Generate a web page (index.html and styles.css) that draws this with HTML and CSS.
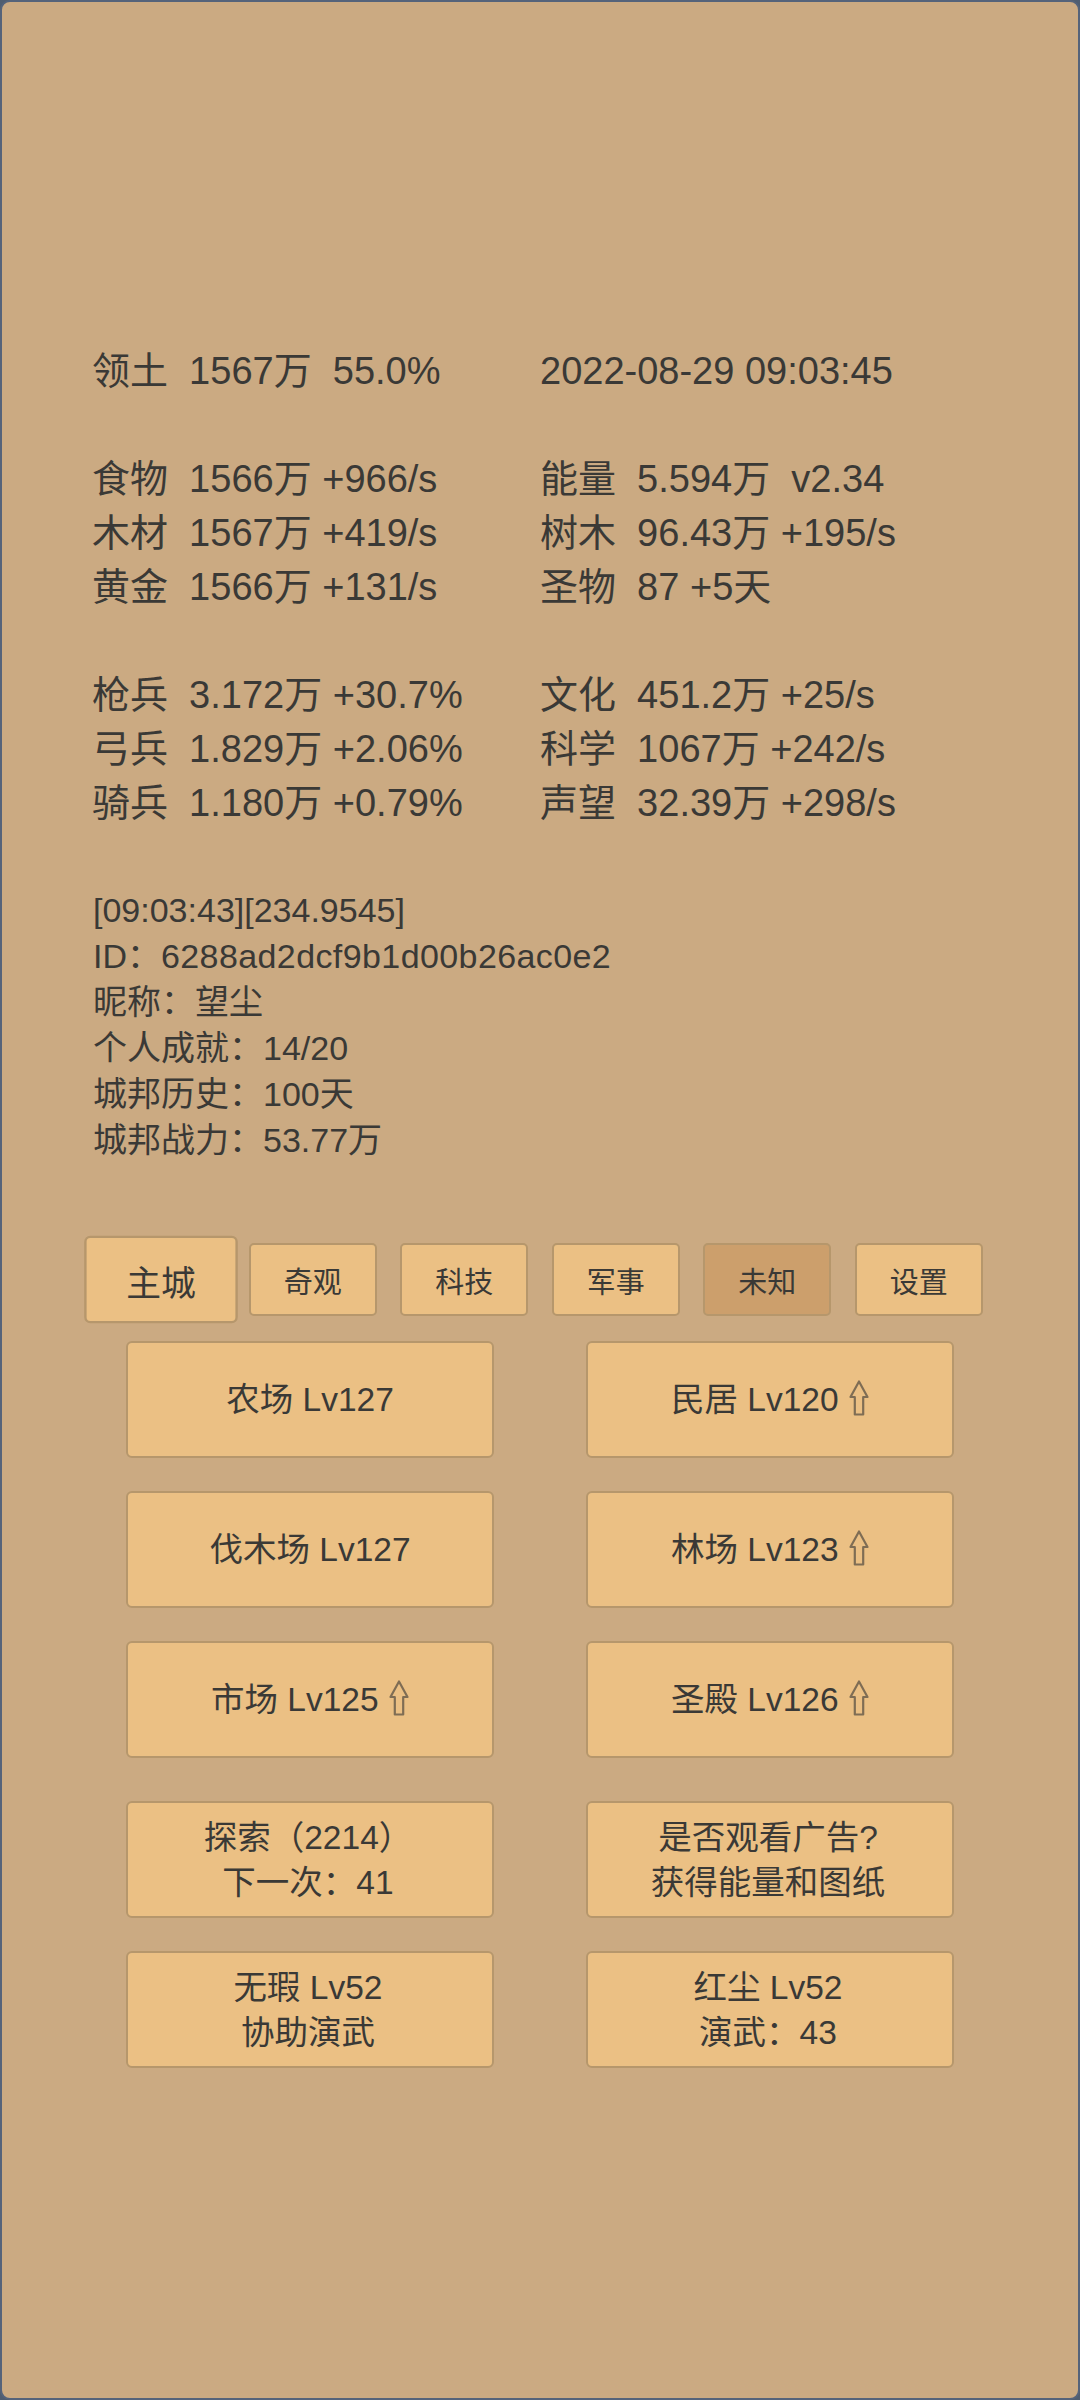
FILE: index.html
```html
<!DOCTYPE html>
<html lang="zh-CN">
<head>
    <meta charset="UTF-8">
    <meta name="viewport" content="width=device-width, initial-scale=1.0">
    <title>城邦</title>
    <link rel="stylesheet" href="styles.css">
</head>
<body>
    <div class="frame">
        <div class="stats">
            <div class="group">
                <span>领土  1567万  55.0%</span>
                <span>2022-08-29 09:03:45</span>
            </div>
            <div class="group">
                <span>食物  1566万 +966/s</span>
                <span>能量  5.594万  v2.34</span>
                <span>木材  1567万 +419/s</span>
                <span>树木  96.43万 +195/s</span>
                <span>黄金  1566万 +131/s</span>
                <span>圣物  87 +5天</span>
            </div>
            <div class="group">
                <span>枪兵  3.172万 +30.7%</span>
                <span>文化  451.2万 +25/s</span>
                <span>弓兵  1.829万 +2.06%</span>
                <span>科学  1067万 +242/s</span>
                <span>骑兵  1.180万 +0.79%</span>
                <span>声望  32.39万 +298/s</span>
            </div>
        </div>

        <div class="info">
            <p>[09:03:43][234.9545]</p>
            <p>ID：<span class="uid">6288ad2dcf9b1d00b26ac0e2</span></p>
            <p>昵称：望尘</p>
            <p>个人成就：14/20</p>
            <p>城邦历史：100天</p>
            <p>城邦战力：53.77万</p>
        </div>

        <div class="tabs">
            <button class="tab active">主城</button>
            <button class="tab">奇观</button>
            <button class="tab">科技</button>
            <button class="tab">军事</button>
            <button class="tab pressed">未知</button>
            <button class="tab">设置</button>
        </div>

        <div class="buildings">
            <button class="bld">农场 Lv127</button>
            <button class="bld">民居 Lv120 <svg class="up" viewBox="0 0 20 36"><path d="M10 1.5 L18.5 17 L14.2 17 L14.2 34.5 L5.8 34.5 L5.8 17 L1.5 17 Z"/></svg></button>
            <button class="bld">伐木场 Lv127</button>
            <button class="bld">林场 Lv123 <svg class="up" viewBox="0 0 20 36"><path d="M10 1.5 L18.5 17 L14.2 17 L14.2 34.5 L5.8 34.5 L5.8 17 L1.5 17 Z"/></svg></button>
            <button class="bld">市场 Lv125 <svg class="up" viewBox="0 0 20 36"><path d="M10 1.5 L18.5 17 L14.2 17 L14.2 34.5 L5.8 34.5 L5.8 17 L1.5 17 Z"/></svg></button>
            <button class="bld">圣殿 Lv126 <svg class="up" viewBox="0 0 20 36"><path d="M10 1.5 L18.5 17 L14.2 17 L14.2 34.5 L5.8 34.5 L5.8 17 L1.5 17 Z"/></svg></button>
        </div>

        <div class="buildings extra">
            <button class="bld two">探索（2214）<br>下一次：41</button>
            <button class="bld two">是否观看广告?<br>获得能量和图纸</button>
            <button class="bld two">无瑕 Lv52<br>协助演武</button>
            <button class="bld two">红尘 Lv52<br>演武：43</button>
        </div>
    </div>
</body>
</html>
```

FILE: styles.css
```css
body {
    margin: 0;
    background-color: #4f5d70;
    font-family: 'Liberation Sans', 'Noto Sans CJK SC', sans-serif;
    color: #3a3936;
}

.frame {
    width: 1080px;
    height: 2400px;
    box-sizing: border-box;
    border: 2px solid #55637a;
    border-radius: 10px;
    background-color: #cbaa82;
    padding-top: 342px;
}

.stats {
    padding-left: 90px;
    font-size: 38px;
    line-height: 54px;
}

.group {
    display: grid;
    grid-template-columns: 448px 1fr;
    margin-bottom: 54px;
}

.group span {
    white-space: pre;
}

.info {
    padding-left: 91px;
    margin-top: 57px;
    font-size: 34px;
    line-height: 46px;
}

.info p {
    margin: 0;
}

.uid {
    letter-spacing: 0.4px;
}

.tabs {
    display: flex;
    justify-content: center;
    gap: 23.5px;
    margin-top: 80px;
}

button {
    font-family: 'Liberation Sans', 'Noto Sans CJK SC', sans-serif;
    color: #3a3936;
    background-color: #ebc084;
    border: 2px solid #b6976c;
    padding: 0;
    margin: 0;
}

.tab {
    width: 128px;
    height: 73px;
    border-radius: 5px;
    font-size: 29px;
}

.tab.active {
    transform: scale(1.2);
}

.tab.pressed {
    background-color: #cc9f6c;
}

.buildings {
    display: grid;
    grid-template-columns: 368px 368px;
    justify-content: center;
    column-gap: 92px;
    row-gap: 33px;
    margin-top: 25px;
}

.buildings.extra {
    margin-top: 43px;
}

.bld {
    height: 117px;
    border-radius: 6px;
    font-size: 33.5px;
    line-height: 45px;
}

.bld.two {
    padding-right: 4px;
}

.up {
    width: 20px;
    height: 36px;
    vertical-align: -5px;
    margin-left: 1px;
}

.up path {
    fill: none;
    stroke: #7f6d54;
    stroke-width: 2.2;
    stroke-linejoin: round;
}
```
